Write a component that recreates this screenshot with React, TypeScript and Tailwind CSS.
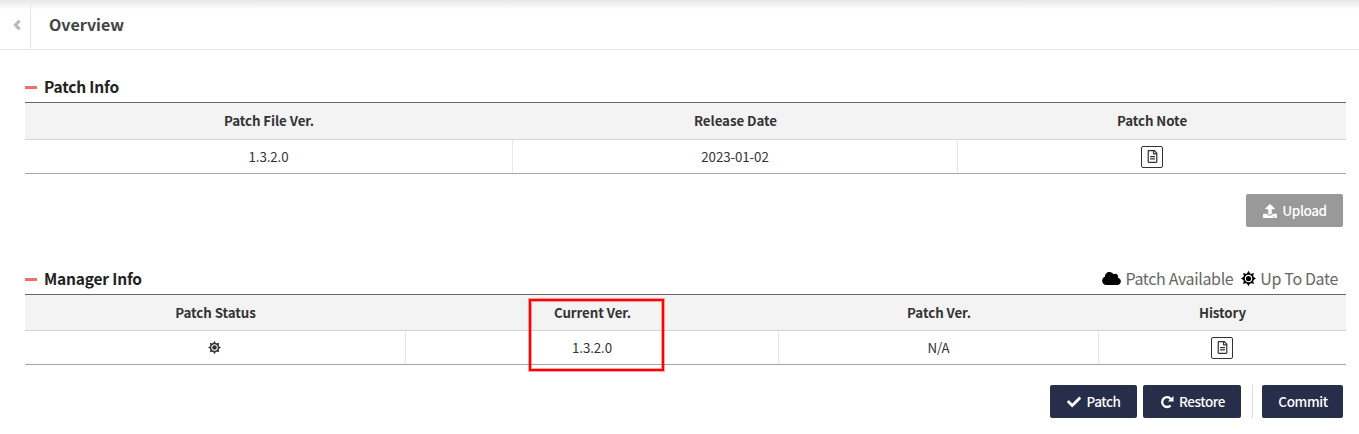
import type { ReactNode } from 'react';
import { FaCloud, FaUpload, FaCheck, FaRegFileAlt } from 'react-icons/fa';

function SunIcon({ className }: { className: string }) {
  const angles = [0, 45, 90, 135, 180, 225, 270, 315];
  return (
    <svg viewBox="0 0 16 16" className={className} fill="currentColor">
      <circle cx="8" cy="8" r="4.9" fill="none" stroke="currentColor" strokeWidth="1.5" />
      <circle cx="8" cy="8" r="2.8" />
      {angles.map((a) => (
        <path key={a} d="M8 -0.2l2.3 4H5.7z" transform={`rotate(${a} 8 8)`} />
      ))}
    </svg>
  );
}

function BackIcon() {
  return (
    <svg viewBox="0 0 8 12" className="ml-[3px] h-3 w-2" fill="none" stroke="currentColor" strokeWidth="3.2">
      <path d="M6.7 1.6L2.4 6l4.3 4.4" />
    </svg>
  );
}

function RestoreIcon() {
  return (
    <svg viewBox="0 0 14 14" className="h-[14px] w-[14px]" fill="none" stroke="currentColor" strokeWidth="2.3">
      <path d="M10.6 10.5A4.9 4.9 0 1 1 10.8 3.9" />
      <path d="M13.5 1v5.6H7.9z" fill="currentColor" stroke="none" />
    </svg>
  );
}

function SectionTitle({ children }: { children: ReactNode }) {
  return (
    <h2 className="flex h-6 items-center gap-[7px] text-[15.5px] font-bold tracking-[-0.18px] text-[#222]">
      <span className="mt-px h-[3px] w-3 bg-[#f56a6a]" />
      <span className="-mt-px">{children}</span>
    </h2>
  );
}

function NoteButton() {
  return (
    <button className="flex h-[22px] w-[22px] items-center justify-center rounded-[2px] border border-[#333] text-[13px] text-[#333]">
      <FaRegFileAlt />
    </button>
  );
}

function ActionButton({ className, children }: { className: string; children: ReactNode }) {
  return (
    <button className={'flex h-[33px] items-center justify-center rounded-[2px] pt-px pl-px text-[13.5px] font-medium tracking-[-0.4px] text-white ' + className}>
      {children}
    </button>
  );
}

function Table({ columns, headHeight, heads, cells }: { columns: string; headHeight: string; heads: string[]; cells: ReactNode[] }) {
  return (
    <div className="border-t border-b border-t-[#666] border-b-[#a5a5a5] text-[13.33px] text-[#333]">
      <div className={'grid border-b border-[#d4d4d4] bg-[#f3f3f3] font-bold tracking-[-0.08px] ' + headHeight + ' ' + columns}>
        {heads.map((head) => (
          <div key={head} className="flex items-center justify-center">{head}</div>
        ))}
      </div>
      <div className={'grid h-[33px] tracking-[-0.1px] ' + columns}>
        {cells.map((cell, i) => (
          <div key={heads[i]} className="flex items-center justify-center border-r border-[#e8e8e8] last:border-r-0">{cell}</div>
        ))}
      </div>
    </div>
  );
}

export default function App() {
  return (
    <div className="relative h-[434px] w-[1359px] overflow-hidden bg-white font-['Noto_Sans_CJK_KR',sans-serif] leading-none">
      <header className="flex h-[50px] border-b border-[#e8e8e8] bg-[linear-gradient(#e8e8e8,#fff_10px)]">
        <div className="flex w-[31px] items-center justify-center border-r border-[#e5e5e5] text-[#bbb]">
          <BackIcon />
        </div>
        <h1 className="flex items-center pb-0.5 pl-[18px] text-[16px] font-bold text-[#444]">Overview</h1>
      </header>
      <main className="pr-[13px] pl-[25px]">
        <section className="pt-[25px]">
          <SectionTitle>Patch Info</SectionTitle>
          <div className="mt-[3px]">
            <Table
              columns="grid-cols-[488px_445px_388px]"
              headHeight="h-[37px]"
              heads={['Patch File Ver.', 'Release Date', 'Patch Note']}
              cells={['1.3.2.0', '2023-01-02', <NoteButton />]}
            />
          </div>
          <div className="mt-5 flex justify-end pr-[3px]">
            <ActionButton className="w-[97px] gap-[5px] bg-[#999]">
              <FaUpload className="h-[14px] w-[14px]" />
              Upload
            </ActionButton>
          </div>
        </section>
        <section className="pt-10">
          <div className="flex items-center justify-between">
            <SectionTitle>Manager Info</SectionTitle>
            <div className="flex items-center pr-2 pb-[2px] text-[16px] tracking-[-0.35px] text-[#666]">
              <FaCloud className="mr-1 h-[15px] w-[19px] text-black" />
              <span>Patch Available</span>
              <SunIcon className="mr-1 ml-2 h-[15px] w-[15px] text-black" />
              <span>Up To Date</span>
            </div>
          </div>
          <div className="mt-[3px]">
            <Table
              columns="grid-cols-[381px_373px_320px_247px]"
              headHeight="h-[36px]"
              heads={['Patch Status', 'Current Ver.', 'Patch Ver.', 'History']}
              cells={[<SunIcon className="mr-px h-[13px] w-[13px]" />, '1.3.2.0', 'N/A', <span className="mr-px"><NoteButton /></span>]}
            />
          </div>
          <div className="mt-5 flex justify-end pr-[3px]">
            <ActionButton className="w-[87px] gap-[5px] bg-[#262e49]">
              <FaCheck className="h-[14px] w-[14px]" />
              Patch
            </ActionButton>
            <ActionButton className="ml-[6px] w-[98px] gap-[5px] bg-[#262e49]">
              <RestoreIcon />
              Restore
            </ActionButton>
            <span className="mr-[9px] ml-[11px] w-px bg-[#ddd]" />
            <ActionButton className="w-[81px] bg-[#262e49]">Commit</ActionButton>
          </div>
        </section>
      </main>
      <div className="absolute top-[299px] left-[529px] h-[72px] w-[135px] border-2 border-[#fe0000] shadow-[0_0_0_1px_rgba(254,0,0,0.35),inset_0_0_0_1px_rgba(254,0,0,0.35)]" />
    </div>
  );
}
